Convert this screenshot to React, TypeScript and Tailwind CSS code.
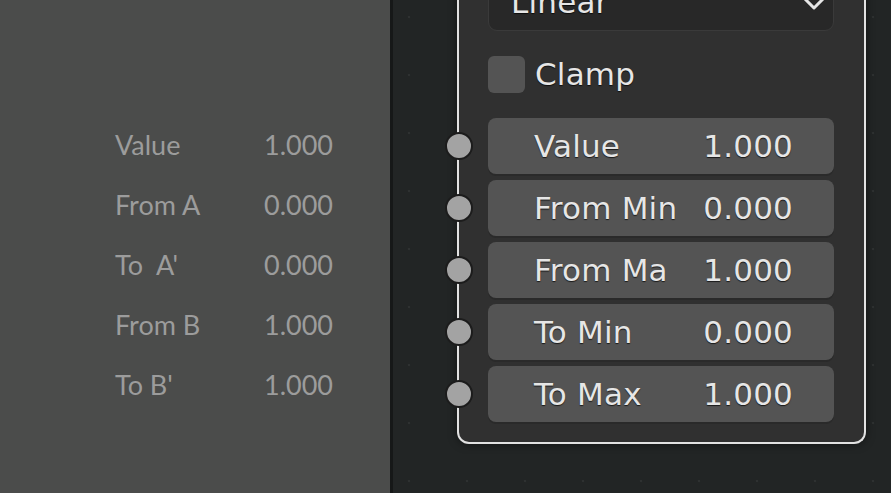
import React from "react";

const rows = [
  { label: "Value", value: "1.000" },
  { label: "From A", value: "0.000" },
  { label: "To  A'", value: "0.000" },
  { label: "From B", value: "1.000" },
  { label: "To B'", value: "1.000" },
];

const fields = [
  { label: "Value", value: "1.000" },
  { label: "From Min", value: "0.000" },
  { label: "From Ma", value: "1.000" },
  { label: "To Min", value: "0.000" },
  { label: "To Max", value: "1.000" },
];

const shadowText = "[text-shadow:0_1px_1px_rgba(0,0,0,0.7)]";

export default function App() {
  return (
    <div className="w-[891px] h-[493px] flex overflow-hidden">
      {/* reference panel */}
      <div className="w-[390px] h-full bg-[#4b4c4b] pt-[115px] pl-[115px] font-['Lato',sans-serif] text-[27px] text-[#9c9c9c]">
        {rows.map((r) => (
          <div key={r.label} className="h-[60px] grid grid-cols-[138px_80px] items-center">
            <span className="whitespace-pre">{r.label}</span>
            <span className="text-right">{r.value}</span>
          </div>
        ))}
      </div>
      <div className="w-[3px] h-full bg-[#161818]" />

      {/* node editor */}
      <div className="relative flex-1 h-full bg-[#222525] bg-[radial-gradient(circle,#2e3131_1.2px,transparent_1.6px)] bg-[size:58px_58px] bg-[position:-13px_-12px] font-['DejaVu_Sans',sans-serif] text-[31px] tracking-[0.2px] text-[#e6e6e6]">
        <div className="absolute left-[64px] top-[-17px] w-[409px] bg-[#303030] border-[2px] border-t-0 border-[#e2e2e2] rounded-b-[12px] pl-[29px] pr-[30px] pb-[20px] shadow-[0_0_8px_rgba(0,0,0,0.5)]">
          {/* dropdown */}
          <div className="relative h-[48px] bg-[#282828] border border-[#3a3a3a] rounded-b-[9px] flex items-center pl-[22px] pb-[10px]">
            <span className={shadowText}>Linear</span>
            <svg className="absolute right-[8px] top-[14px]" width="22" height="14" viewBox="0 0 22 14">
              <path d="M2 1 L11 10 L20 1" fill="none" stroke="#e6e6e6" strokeWidth="3" strokeLinecap="round" strokeLinejoin="round" />
            </svg>
          </div>

          {/* clamp */}
          <div className="mt-[24px] flex items-center gap-[10px] h-[38px]">
            <div className="w-[37px] h-[37px] rounded-[6px] bg-[#545454]" />
            <span className={shadowText}>Clamp</span>
          </div>

          {/* inputs */}
          <div className="mt-[25px] flex flex-col gap-[6px]">
            {fields.map((f) => (
              <div key={f.label} className="relative">
                <div className="absolute left-[-43px] top-1/2 -translate-y-1/2 w-[28px] h-[28px] rounded-full bg-[#a3a3a3] border-[2px] border-[#1c1c1c]" />
                <div className="h-[56px] rounded-[8px] bg-[#545454] shadow-[0_2px_0_#2a2a2a] flex items-center justify-between pl-[46px] pr-[41px]">
                  <span className={shadowText}>{f.label}</span>
                  <span className={shadowText}>{f.value}</span>
                </div>
              </div>
            ))}
          </div>
        </div>
      </div>
    </div>
  );
}
